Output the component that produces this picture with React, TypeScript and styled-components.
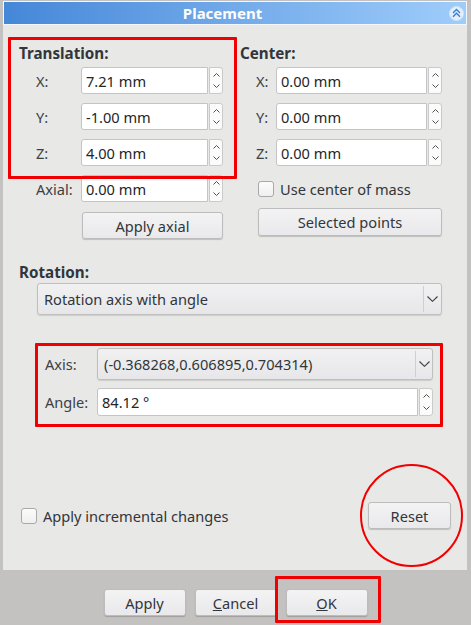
import React from "react";
import styled, { createGlobalStyle } from "styled-components";

const Global = createGlobalStyle`
  html, body { margin: 0; padding: 0; background: #c3c2c0; }
  body { font-family: "Noto Sans", "Open Sans", sans-serif; font-size: 14.6px; color: #31363b; }
  * { box-sizing: border-box; }
`;

const Window = styled.div`
  width: 471px;
  height: 625px;
  display: flex;
  flex-direction: column;
  background: #c3c2c0;
  overflow: hidden;
`;

const Panel = styled.div`
  margin: 1px 4px 0 3px;
  height: 569px;
  background: #e8e8e6;
  display: flex;
  flex-direction: column;
`;

const TitleBar = styled.div`
  height: 24px;
  border: 1px solid #f4f7fb;
  background: linear-gradient(to right, #4587d8, #9fcdfb);
  display: flex;
  align-items: center;
  padding-right: 2px;
`;

const TitleText = styled.div`
  flex: 1;
  text-align: center;
  font-weight: 700;
  font-size: 15px;
  color: #ffffff;
  line-height: 20px;
  padding-right: 8px;
`;

const CollapseButton = styled.div`
  width: 15px;
  height: 15px;
  border-radius: 50%;
  background: #e7eef7;
  border: 1px solid #d4e3f4;
  display: flex;
  align-items: center;
  justify-content: center;
`;

const Content = styled.div`
  flex: 1;
  display: flex;
  flex-direction: column;
  padding: 0 25px 41px 16px;
`;

const TopGrid = styled.div`
  display: grid;
  grid-template-columns: 204px 1fr;
  column-gap: 17px;
  margin-top: 18px;
`;

const Column = styled.div`
  display: flex;
  flex-direction: column;
`;

const Marked = styled.div<{ $t: number; $r: number; $b: number; $l: number; $round?: boolean; $w?: number }>`
  position: relative;
  &::after {
    content: "";
    position: absolute;
    top: ${(p) => p.$t}px;
    right: ${(p) => p.$r}px;
    bottom: ${(p) => p.$b}px;
    left: ${(p) => p.$l}px;
    border: ${(p) => p.$w ?? 3}px solid #f00000;
    border-radius: ${(p) => (p.$round ? "50%" : "1px")};
    pointer-events: none;
  }
`;

const AxisMarked = styled(Marked)`
  margin: 31px 2px 0 19px;
`;

const GroupTitle = styled.div`
  font-weight: 700;
  font-size: 15.2px;
  line-height: 20px;
  color: #31363b;
`;

const Rows = styled.div<{ $indent: number; $label: number }>`
  display: grid;
  grid-template-columns: ${(p) => p.$label}px 1fr;
  row-gap: 9px;
  padding-left: ${(p) => p.$indent}px;
  align-items: center;
`;

const RowsTop = styled(Rows)`
  margin-top: 4px;
`;

const RowsAfter = styled(Rows)`
  margin-top: 9px;
`;

const Label = styled.div`
  color: #3b4045;
  line-height: 20px;
  white-space: nowrap;
`;

const SpinBox = styled.div`
  display: flex;
  height: 27px;
  gap: 1px;
`;

const Field = styled.div`
  flex: 1;
  background: #ffffff;
  border: 1px solid #c4c4c4;
  border-radius: 3px 0 0 3px;
  padding-left: 4px;
  display: flex;
  align-items: center;
  color: #232627;
  white-space: nowrap;
`;

const Spinner = styled.div`
  width: 14px;
  background: #fbfbfb;
  border: 1px solid #cacaca;
  border-radius: 0 3px 3px 0;
  display: flex;
  flex-direction: column;
  align-items: center;
  justify-content: space-between;
  padding: 5px 0 5px;
`;

const Button = styled.button`
  height: 27px;
  border: 1px solid #bcbcbc;
  border-radius: 3px;
  background: linear-gradient(#f3f3f4, #e9e9eb);
  font: inherit;
  color: #31363b;
  box-shadow: 0 1px 1px rgba(0, 0, 0, 0.18);
  padding: 0;
  cursor: default;
`;

const ApplyAxialButton = styled(Button)`
  margin: 10px 0 0 63px;
`;

const SelectedButton = styled(Button)`
  margin: 6px 0 0 18px;
  height: 28px;
`;

const CheckRow = styled.label<{ $left: number }>`
  display: flex;
  align-items: center;
  gap: 6px;
  padding-left: ${(p) => p.$left}px;
  height: 27px;
  margin-top: 9px;
`;

const CheckBox = styled.span`
  width: 16px;
  height: 16px;
  border: 1px solid #a9a9a9;
  border-radius: 3px;
  background: linear-gradient(#fcfcfc, #efefef);
  flex: none;
`;

const SectionTitle = styled(GroupTitle)`
  margin-top: 23px;
`;

const Combo = styled.div<{ $h: number }>`
  height: ${(p) => p.$h}px;
  border: 1px solid #bfbfbf;
  border-radius: 3px;
  background: linear-gradient(#f1f1f2, #e7e7e9);
  box-shadow: 0 1px 1px rgba(0, 0, 0, 0.12);
  display: flex;
  align-items: center;
  color: #31363b;
`;

const RotationCombo = styled(Combo)`
  margin: 1px 0 0 18px;
`;

const ComboText = styled.div`
  flex: 1;
  padding-left: 6px;
  white-space: nowrap;
`;

const ComboArrow = styled.div<{ $w: number }>`
  width: ${(p) => p.$w}px;
  align-self: stretch;
  margin: 2px 0;
  border-left: 1px solid #cfcfcf;
  display: flex;
  align-items: center;
  justify-content: center;
`;

const AxisGroup = styled.div`
  padding: 2px 7px 8px 7px;
  display: grid;
  grid-template-columns: 52px 1fr;
  row-gap: 8px;
  align-items: center;
`;

const AngleSpin = styled(SpinBox)`
  height: 28px;
`;

const BottomRow = styled.div`
  margin: auto -9px 0 2px;
  display: flex;
  align-items: center;
  justify-content: space-between;
`;

const BottomCheck = styled.label`
  display: flex;
  align-items: center;
  gap: 6px;
`;

const ResetButton = styled(Button)`
  width: 83px;
`;

const ButtonBar = styled.div`
  flex: 1;
  display: flex;
  justify-content: center;
  align-items: flex-start;
  gap: 9px;
  padding-top: 19px;
`;

const DialogButton = styled(Button)`
  width: 82px;
`;

const UpChevron = () => (
  <svg width="7" height="4" viewBox="0 0 7 4">
    <path d="M0.5 3.5 L3.5 0.5 L6.5 3.5" stroke="#505050" strokeWidth="1" fill="none" />
  </svg>
);

const DownChevron = () => (
  <svg width="7" height="4" viewBox="0 0 7 4">
    <path d="M0.5 0.5 L3.5 3.5 L6.5 0.5" stroke="#505050" strokeWidth="1" fill="none" />
  </svg>
);

const ComboChevron = () => (
  <svg width="11" height="6" viewBox="0 0 11 6">
    <path d="M0.5 0.5 L5.5 5.3 L10.5 0.5" stroke="#3a3f44" strokeWidth="1.1" fill="none" />
  </svg>
);

const Spin = ({ value }: { value: string }) => (
  <SpinBox>
    <Field>{value}</Field>
    <Spinner>
      <UpChevron />
      <DownChevron />
    </Spinner>
  </SpinBox>
);

export default function App() {
  return (
    <>
      <Global />
      <Window>
        <Panel>
          <TitleBar>
            <TitleText>Placement</TitleText>
            <CollapseButton>
              <svg width="9" height="10" viewBox="0 0 9 10">
                <path d="M1 5 L4.5 1.5 L8 5 M1 8.8 L4.5 5.3 L8 8.8" stroke="#2f7ee0" strokeWidth="1.4" fill="none" />
              </svg>
            </CollapseButton>
          </TitleBar>
          <Content>
            <TopGrid>
              <Column>
                <Marked $t={-6} $r={-14} $b={-13} $l={-11}>
                  <GroupTitle>Translation:</GroupTitle>
                  <RowsTop $indent={17} $label={45}>
                    <Label>X:</Label>
                    <Spin value="7.21 mm" />
                    <Label>Y:</Label>
                    <Spin value="-1.00 mm" />
                    <Label>Z:</Label>
                    <Spin value="4.00 mm" />
                  </RowsTop>
                </Marked>
                <RowsAfter $indent={17} $label={45}>
                  <Label>Axial:</Label>
                  <Spin value="0.00 mm" />
                </RowsAfter>
                <ApplyAxialButton>Apply axial</ApplyAxialButton>
              </Column>
              <Column>
                <GroupTitle>Center:</GroupTitle>
                <RowsTop $indent={16} $label={20}>
                  <Label>X:</Label>
                  <Spin value="0.00 mm" />
                  <Label>Y:</Label>
                  <Spin value="0.00 mm" />
                  <Label>Z:</Label>
                  <Spin value="0.00 mm" />
                </RowsTop>
                <CheckRow $left={18}>
                  <CheckBox />
                  <span>Use center of mass</span>
                </CheckRow>
                <SelectedButton>Selected points</SelectedButton>
              </Column>
            </TopGrid>

            <SectionTitle>Rotation:</SectionTitle>
            <RotationCombo $h={32}>
              <ComboText>Rotation axis with angle</ComboText>
              <ComboArrow $w={18}>
                <ComboChevron />
              </ComboArrow>
            </RotationCombo>

            <AxisMarked $t={-3} $r={-3} $b={-3} $l={-3}>
              <AxisGroup>
                <Label>Axis:</Label>
                <Combo $h={32}>
                  <ComboText>(-0.368268,0.606895,0.704314)</ComboText>
                  <ComboArrow $w={17}>
                    <ComboChevron />
                  </ComboArrow>
                </Combo>
                <Label>Angle:</Label>
                <AngleSpin>
                  <Field>84.12 °</Field>
                  <Spinner>
                    <UpChevron />
                    <DownChevron />
                  </Spinner>
                </AngleSpin>
              </AxisGroup>
            </AxisMarked>

            <BottomRow>
              <BottomCheck>
                <CheckBox />
                <span>Apply incremental changes</span>
              </BottomCheck>
              <Marked $t={-38} $r={-12} $b={-38} $l={-8} $round $w={2.5}>
                <ResetButton>Reset</ResetButton>
              </Marked>
            </BottomRow>
          </Content>
        </Panel>
        <ButtonBar>
          <DialogButton>Apply</DialogButton>
          <DialogButton>
            <u>C</u>ancel
          </DialogButton>
          <Marked $t={-13} $r={-13} $b={-7} $l={-11}>
            <DialogButton>
              <u>O</u>K
            </DialogButton>
          </Marked>
        </ButtonBar>
      </Window>
    </>
  );
}
